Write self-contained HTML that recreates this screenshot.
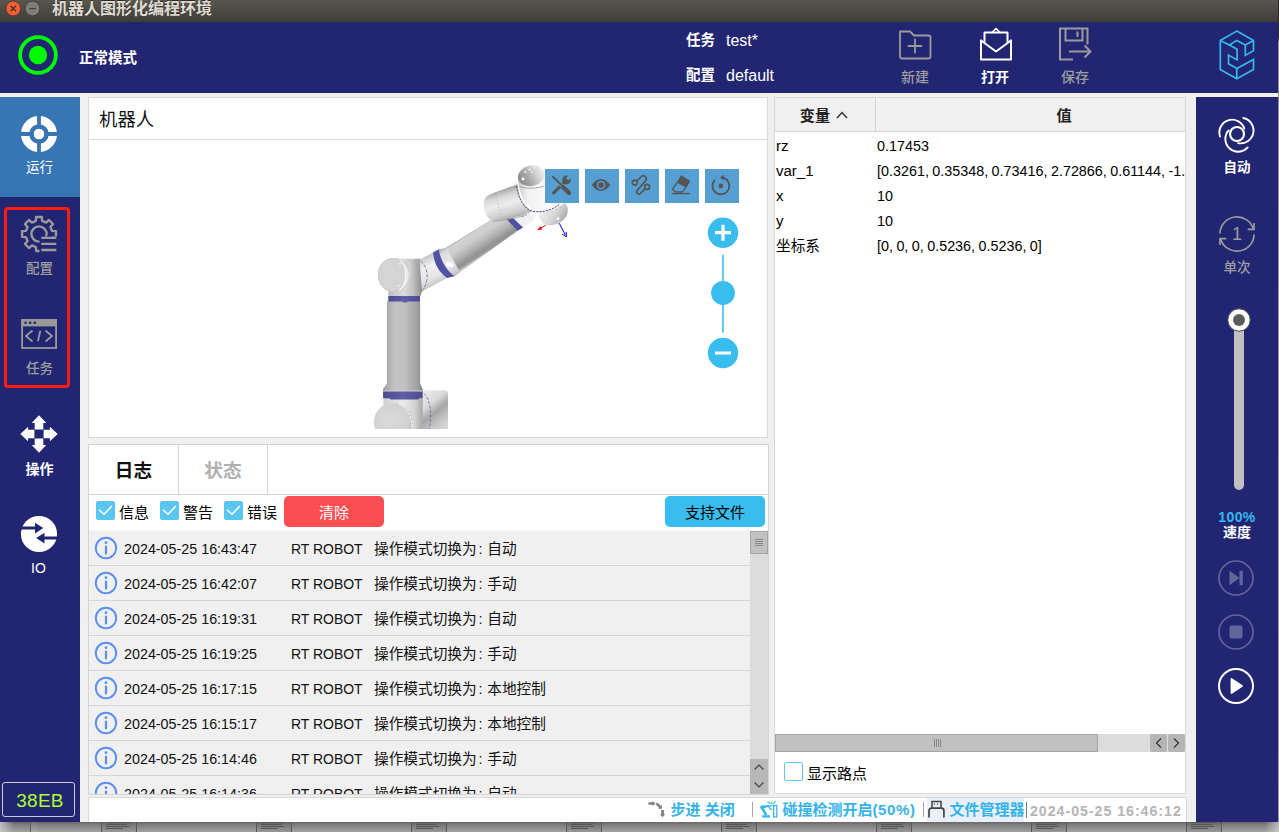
<!DOCTYPE html>
<html lang="zh-CN">
<head>
<meta charset="utf-8">
<title>机器人图形化编程环境</title>
<style>
*{box-sizing:border-box;margin:0;padding:0}
html,body{width:1279px;height:832px;overflow:hidden}
body{position:relative;background:#8a8a8a;font-family:"Liberation Sans","Noto Sans CJK SC",sans-serif;font-size:14.67px;color:#000;line-height:1}
.abs{position:absolute}
.desk{position:absolute;left:0;top:0;width:1279px;height:832px;background:linear-gradient(#3b3a36 0,#3b3a36 22px,#999 22px,#b5b5b5 822px,#686868 822px,#858585 826px,#a2a2a2 832px)}
.th{position:absolute;top:822px;width:36px;height:10px;border-left:1px solid #585858;border-right:1px solid #585858;background:rgba(0,0,0,.06)}
.th i{position:absolute;left:4px;height:1px;background:#565656}
.win{position:absolute;left:0;top:0;width:1278px;height:822px;background:#f0f0f0;overflow:hidden}
.titlebar{position:absolute;left:0;top:0;width:1278px;height:22px;background:linear-gradient(#59564e,#3e3d38);color:#dfdbd2;font-weight:bold;font-size:16px}
.titlebar .t{position:absolute;left:52px;top:-2.500px;line-height:22px;white-space:nowrap;text-shadow:0 -1px 0 rgba(0,0,0,.5)}
.tb-btn{position:absolute;top:1px;width:15px;height:15px;border-radius:50%}
.header{position:absolute;left:0;top:22px;width:1278px;height:71px;background:#222672}
.lside{position:absolute;left:0;top:97px;width:80px;height:725px;background:#222672}
.rside{position:absolute;left:1196px;top:97px;width:82px;height:725px;background:#222672}
.panel{position:absolute;background:#fff;border:1px solid #d9d9d9}
.w{color:#fff}
.sl{left:0;width:79px;text-align:center;font-size:13.5px;line-height:16px}
.nowrap{white-space:nowrap}
.tbtn{position:absolute;top:71px;width:34px;height:34px;background:#579fd3}
.tbtn svg{display:block}

.cb{position:absolute;width:19px;height:19px;background:#5ac5f1;border-radius:2px}
.cb svg{display:block}
.cbl{top:59px;font-size:15px;line-height:18px}
.lrow{position:absolute;left:0;width:661px;height:35px;border-bottom:1px solid #d6d6d6;font-size:14.67px;color:#111;white-space:nowrap}
.lrow span{top:9px;line-height:18px}
.cl{font-weight:normal;margin-left:2px;margin-right:-1px}
.c1{left:35px;font-size:15.3px;transform:scaleX(.9355);transform-origin:0 50%}.c2{left:201.500px;font-size:15.3px;transform:scaleX(.912);transform-origin:0 50%}.c3{left:285px;word-spacing:1.500px}
.vr{position:absolute;left:0;width:410px;height:25px;overflow:hidden;white-space:nowrap;font-size:15.3px;line-height:25px;color:#000}
.vr span{top:-1px;word-spacing:-.600px;transform:scaleX(.9385);transform-origin:0 50%}
.vr span:first-child{transform:scaleX(.98)}
</style>
</head>
<body>
<div class="desk"><div class="abs" style="left:1278px;top:0;width:1px;height:822px;background:linear-gradient(#2b2a26 0,#2b2a26 38px,#8f8f8f 42px,#9a9a9a 822px)"></div><div class="abs" style="left:30px;top:822px;width:1px;height:10px;background:#5c5c5c"></div><div class="abs" style="left:31px;top:822px;width:6px;height:10px;background:rgba(255,255,255,.08)"></div><div class="th" style="left:101px"><i style="top:0;width:25px"></i><i style="top:2px;width:21px"></i><i style="top:4px;width:23px"></i><i style="top:6px;width:17px"></i></div><div class="th" style="left:256px"><i style="top:0;width:25px"></i><i style="top:2px;width:21px"></i><i style="top:4px;width:23px"></i><i style="top:6px;width:17px"></i></div><div class="th" style="left:411px"><i style="top:0;width:25px"></i><i style="top:2px;width:21px"></i><i style="top:4px;width:23px"></i><i style="top:6px;width:17px"></i></div><div class="th" style="left:566px"><i style="top:0;width:25px"></i><i style="top:2px;width:21px"></i><i style="top:4px;width:23px"></i><i style="top:6px;width:17px"></i></div><div class="th" style="left:721px"><i style="top:0;width:25px"></i><i style="top:2px;width:21px"></i><i style="top:4px;width:23px"></i><i style="top:6px;width:17px"></i></div><div class="th" style="left:876px"><i style="top:0;width:25px"></i><i style="top:2px;width:21px"></i><i style="top:4px;width:23px"></i><i style="top:6px;width:17px"></i></div><div class="th" style="left:1031px"><i style="top:0;width:25px"></i><i style="top:2px;width:21px"></i><i style="top:4px;width:23px"></i><i style="top:6px;width:17px"></i></div><div class="th" style="left:1186px"><i style="top:0;width:25px"></i><i style="top:2px;width:21px"></i><i style="top:4px;width:23px"></i><i style="top:6px;width:17px"></i></div><div class="abs" style="left:0;top:822px;width:14px;height:10px;background:linear-gradient(90deg,rgba(210,210,210,.75),rgba(210,210,210,0))"></div><div class="abs" style="left:1265px;top:822px;width:14px;height:10px;background:linear-gradient(270deg,rgba(210,210,210,.75),rgba(210,210,210,0))"></div></div>
<div class="win">
  <div class="titlebar">
    <svg class="abs" style="left:4px;top:0" width="40" height="18" viewBox="0 0 40 18"><circle cx="9.300" cy="8.500" r="7.400" fill="#e9603a" stroke="#5a2a1a" stroke-width=".8"/><path d="M6.700 5.900l5.200 5.200M11.900 5.900l-5.200 5.200" stroke="#4a2010" stroke-width="1.200"/><circle cx="28.500" cy="8.500" r="7.400" fill="#807d76" stroke="#35342f" stroke-width=".8"/><path d="M25.300 8.600h6.400" stroke="#3c3b37" stroke-width="1.200"/></svg>
    <div class="t">机器人图形化编程环境</div>
  </div>
  <div class="header" id="header">
    <svg class="abs" style="left:17px;top:12px" width="42" height="42" viewBox="0 0 42 42"><circle cx="21" cy="21" r="17.9" fill="none" stroke="#00fb00" stroke-width="3.8"/><circle cx="21" cy="21" r="9.2" fill="#00fb00"/></svg>
    <div class="abs w nowrap" style="left:79px;top:28px;font-size:14.5px;font-weight:bold;line-height:16px">正常模式</div>
    <div class="abs w nowrap" style="left:686px;top:10px;font-size:14.5px;font-weight:bold;line-height:16px">任务</div>
    <div class="abs w nowrap" style="left:726px;top:11px;font-size:16px;line-height:16px">test*</div>
    <div class="abs w nowrap" style="left:686px;top:45px;font-size:14.5px;font-weight:bold;line-height:16px">配置</div>
    <div class="abs w nowrap" style="left:726px;top:46px;font-size:16px;line-height:16px">default</div>
    <!-- new -->
    <svg class="abs" style="left:897px;top:6px" width="36" height="34" viewBox="0 0 36 34" fill="none" stroke="#9a9a9a" stroke-width="1.8" stroke-linejoin="round" stroke-linecap="round"><path d="M3 3.5h10l4 4h14.5a2 2 0 0 1 2 2V28.5a2 2 0 0 1-2 2H5a2 2 0 0 1-2-2V3.5z"/><path d="M18 11.5v13M11.5 18h13"/></svg>
    <div class="abs nowrap" style="left:895px;top:47px;width:40px;text-align:center;font-size:14px;line-height:16px;color:#9e9e9e;font-weight:500">新建</div>
    <!-- open -->
    <svg class="abs" style="left:978px;top:4px" width="36" height="36" viewBox="0 0 36 36" fill="none" stroke="#fff" stroke-width="2" stroke-linejoin="round" stroke-linecap="round"><path d="M3 14.5V33.5h30V14.5"/><path d="M3 14.5l15 11 15-11"/><path d="M6.5 16V6.5h23V16"/><path d="M14 6.5l4-4 4 4" stroke-width="1.6"/></svg>
    <div class="abs w nowrap" style="left:975px;top:47px;width:40px;text-align:center;font-size:14px;font-weight:bold;line-height:16px">打开</div>
    <!-- save -->
    <svg class="abs" style="left:1057px;top:4px" width="38" height="36" viewBox="0 0 38 36" fill="none" stroke="#9a9a9a" stroke-width="2" stroke-linejoin="miter" stroke-linecap="butt"><path d="M16 33.5H3V2.5h27.5v16"/><path d="M8.5 2.5v12h17v-12"/><path d="M20.5 5.5v5.5"/><path d="M12 25.5h21"/><path d="M27.5 19.5l6 6-6 6"/></svg>
    <div class="abs nowrap" style="left:1055px;top:47px;width:40px;text-align:center;font-size:14px;line-height:16px;color:#9e9e9e;font-weight:500">保存</div>
    <!-- logo -->
    <svg class="abs" style="left:1216px;top:6px" width="42" height="54" viewBox="0 0 42 54" fill="none" stroke="#35b8ec" stroke-width="1.7" stroke-linejoin="miter"><path d="M20.8 3.1 37.5 12.4 37.5 22.8 29.3 27.4 29.3 17 20.8 12.4 13.4 17 21.1 21.3 21.1 31.9 12.5 27.1 12.5 35.8 20.8 40.6 37.5 31.4 37.5 41.5 20.8 50.8 4.3 41.5 4.3 12.4Z"/><path d="M4.3 12.4 13.4 17M29.3 17l8.2-4.6M20.8 40.6v10.2"/></svg>
  </div>
  <div class="lside" id="lside">
    <div class="abs" style="left:0;top:0;width:80px;height:100px;background:#3775b4"></div>
    <!-- run icon -->
    <svg class="abs" style="left:19px;top:17px" width="40" height="40" viewBox="-20 -20 40 40"><circle r="13.9" fill="none" stroke="#fff" stroke-width="8.2"/><circle r="5.2" fill="#fff"/><path d="M-20 0H20M0-20V20" stroke="#3775b4" stroke-width="3.8"/><circle r="5.2" fill="#fff"/></svg>
    <div class="abs w nowrap sl" style="top:63px">运行</div>
    <!-- red highlight -->
    <div class="abs" style="left:4px;top:110px;width:66px;height:181px;border:3px solid #fb1d0f;border-radius:4px"></div>
    <!-- config icon -->
    <svg class="abs" style="left:19px;top:117px" width="40" height="40" viewBox="-20 -20 40 40" fill="none" stroke="#9a9a9a" stroke-width="2.400" stroke-linejoin="round"><defs><clipPath id="gc"><path d="M-20-20h40v22.500h-19.500v17.500h-20.500z"/></clipPath></defs><g clip-path="url(#gc)"><path d="M-3.13 -13.03 L-2.84 -16.96 L2.84 -16.96 L3.13 -13.03 L7.00 -11.43 L9.99 -14.00 L14.00 -9.99 L11.43 -7.00 L13.03 -3.13 L16.96 -2.84 L16.96 2.84 L13.03 3.13 L11.43 7.00 L14.00 9.99 L9.99 14.00 L7.00 11.43 L3.13 13.03 L2.84 16.96 L-2.84 16.96 L-3.13 13.03 L-7.00 11.43 L-9.99 14.00 L-14.00 9.99 L-11.43 7.00 L-13.03 3.13 L-16.96 2.84 L-16.96 -2.84 L-13.03 -3.13 L-11.43 -7.00 L-14.00 -9.99 L-9.99 -14.00 L-7.00 -11.43Z"/><circle r="7.600"/></g><path d="M2.300 3.900h15M2.300 9.800h15M2.300 16h15" stroke-width="2.300"/></svg>
    <div class="abs nowrap sl" style="top:164px;color:#9e9e9e;font-weight:500">配置</div>
    <!-- task icon -->
    <svg class="abs" style="left:19px;top:219px" width="40" height="36" viewBox="0 0 40 36" fill="none" stroke="#9a9a9a" stroke-width="1.8"><rect x="3.100" y="4" width="34" height="28" /><rect x="3.100" y="4" width="34" height="5.500" fill="#9a9a9a"/><circle cx="6.600" cy="6.700" r="1.300" fill="#222672" stroke="none"/><circle cx="11.200" cy="6.700" r="1.300" fill="#222672" stroke="none"/><circle cx="15.800" cy="6.700" r="1.300" fill="#222672" stroke="none"/><path d="M13.500 14.500l-6.500 5.500 6.500 5.500M26.500 14.500l6.500 5.500-6.500 5.500M21.300 14.800l-2.400 10.400"/></svg>
    <div class="abs nowrap sl" style="top:264px;color:#9e9e9e;font-weight:500">任务</div>
    <!-- operate icon -->
    <svg class="abs" style="left:19px;top:317px" width="40" height="40" viewBox="-20 -20 40 40" fill="#fff"><path id="ar" d="M0-18.700l7.300 7.800h-3v6.300h-8.600v-6.300h-3z"/><use href="#ar" transform="rotate(90)"/><use href="#ar" transform="rotate(180)"/><use href="#ar" transform="rotate(270)"/></svg>
    <div class="abs w nowrap sl" style="top:364px;font-weight:bold;font-size:14px">操作</div>
    <!-- io icon -->
    <svg class="abs" style="left:19px;top:417px" width="40" height="40" viewBox="-20 -20 40 40"><circle r="18.100" fill="#fff"/><path d="M-19-7.400h15v-3.900l8.300 5.400-8.300 5.400v-3.900h-15zM19 2.600h-13.500v-3.900l-8.300 5.400 8.300 5.400v-3.900h13.500z" fill="#222672"/></svg>
    <div class="abs w nowrap sl" style="top:463px;font-size:14px;left:-1px">IO</div>
    <!-- 38EB -->
    <div class="abs nowrap" style="left:2px;top:685px;width:73px;height:35px;border:1px solid #c9c9d8;border-radius:3px;color:#adff2f;font-size:19px;line-height:36px;text-align:center;letter-spacing:.3px;padding-left:3px">38EB</div>
  </div>
  <div class="rside" id="rside">
    <!-- auto icon -->
    <svg class="abs" style="left:21px;top:17px" width="40" height="40" viewBox="-20 -20 40 40" fill="none" stroke="#fff" stroke-width="1.900" stroke-linecap="round"><circle r="7" stroke-width="2.200"/><g id="sw"><path d="M-17 2.500A12.500 12.500 0 0 1 7.300-5.500"/></g><use href="#sw" transform="rotate(120)"/><use href="#sw" transform="rotate(240)"/></svg>
    <div class="abs w nowrap sl" style="top:63px;left:0;width:82px;font-weight:bold">自动</div>
    <!-- single icon -->
    <svg class="abs" style="left:21px;top:117px" width="40" height="40" viewBox="-20 -20 40 40" fill="none" stroke="#9a9a9a" stroke-width="1.700" stroke-linecap="butt" stroke-linejoin="miter"><path d="M-17.100-.5A17.100 17.100 0 0 1 16.400-4.900M17.100.5A17.100 17.100 0 0 1-16.400 4.900"/><path d="M17-11v6.300h-6.300M-17 11v-6.300h6.300"/><text x="0" y="6.300" text-anchor="middle" font-size="18" fill="#9a9a9a" stroke="none" font-family="Liberation Sans, sans-serif">1</text></svg>
    <div class="abs nowrap sl" style="top:163px;left:0;width:82px;color:#9e9e9e;font-weight:500">单次</div>
    <!-- slider -->
    <div class="abs" style="left:38px;top:223px;width:10px;height:170px;background:#c0c0c0;border-radius:0 0 5px 5px"></div>
    <svg class="abs" style="left:30px;top:210px" width="26" height="26" viewBox="-13 -13 26 26"><circle r="11.200" fill="#fff" stroke="#4a4a4a" stroke-width="1"/><circle r="6" fill="#5c5c5c"/></svg>
    <div class="abs nowrap" style="left:0;top:413px;width:82px;text-align:center;padding-left:0px;color:#35b8ec;font-weight:bold;font-size:14px;line-height:14px;letter-spacing:.400px">100%</div>
    <div class="abs w nowrap" style="left:0;top:427px;width:82px;text-align:center;padding-left:0px;font-weight:bold;font-size:14px;line-height:16px">速度</div>
    <!-- step -->
    <svg class="abs" style="left:20px;top:461px" width="40" height="40" viewBox="-20 -20 40 40"><circle r="17" fill="none" stroke="#63669a" stroke-width="1.700"/><path d="M-6.500-7.200l10 7.200-10 7.200zM3.500-7.200h3.300v14.400h-3.300z" fill="#63669a"/></svg>
    <!-- stop -->
    <svg class="abs" style="left:20px;top:515px" width="40" height="40" viewBox="-20 -20 40 40"><circle r="17" fill="none" stroke="#63669a" stroke-width="1.700"/><rect x="-6.500" y="-6.500" width="13" height="13" rx="2" fill="#63669a"/></svg>
    <!-- play -->
    <svg class="abs" style="left:20px;top:569px" width="40" height="40" viewBox="-20 -20 40 40"><circle r="17" fill="none" stroke="#fff" stroke-width="2"/><path d="M-4.500-7l10.500 7-10.500 7z" fill="#fff" stroke="#fff" stroke-width="1.800" stroke-linejoin="round"/></svg>
  </div>
  <div class="panel" id="robot" style="left:88px;top:97px;width:680px;height:341px">
    <div class="abs nowrap" style="left:10px;top:10px;font-size:18.4px;line-height:24px;color:#111">机器人</div>
    <div class="abs" style="left:1px;top:41px;width:677px;height:1px;background:#dcdcdc"></div>
    <!--RS--><svg class="abs" style="left:251px;top:52px" width="260" height="290" viewBox="340 150 260 290">
      <defs>
        <linearGradient id="gcyl" x1="0" x2="1" y1="0" y2="0"><stop offset="0" stop-color="#7f7f7f"/><stop offset=".06" stop-color="#a6a6a6"/><stop offset=".3" stop-color="#c4c4c4"/><stop offset=".55" stop-color="#c0c0c0"/><stop offset=".85" stop-color="#a2a2a2"/><stop offset=".96" stop-color="#8c8c8c"/><stop offset="1" stop-color="#787878"/></linearGradient>
        <linearGradient id="gband" x1="0" x2="1" y1="0" y2="0"><stop offset="0" stop-color="#4a4b90"/><stop offset=".5" stop-color="#5d5ea7"/><stop offset="1" stop-color="#4b4c8e"/></linearGradient>
        <linearGradient id="garm" gradientUnits="userSpaceOnUse" x1="474" y1="229.500" x2="488.500" y2="252"><stop offset="0" stop-color="#a0a0a0"/><stop offset=".07" stop-color="#d2d2d2"/><stop offset=".3" stop-color="#cfcfcf"/><stop offset=".55" stop-color="#b6b6b6"/><stop offset=".85" stop-color="#909090"/><stop offset=".95" stop-color="#9c9c9c"/><stop offset="1" stop-color="#c6c6c6"/></linearGradient>
        <linearGradient id="gflare" gradientUnits="userSpaceOnUse" x1="440" y1="250" x2="456" y2="277"><stop offset="0" stop-color="#b8b8b8"/><stop offset=".15" stop-color="#dedede"/><stop offset=".55" stop-color="#e6e6e6"/><stop offset=".85" stop-color="#cfcfcf"/><stop offset="1" stop-color="#aaaaaa"/></linearGradient>
        <linearGradient id="gneck" gradientUnits="userSpaceOnUse" x1="426" y1="256" x2="440" y2="286"><stop offset="0" stop-color="#c4c4c4"/><stop offset=".3" stop-color="#f0f0f0"/><stop offset=".7" stop-color="#e4e4e4"/><stop offset="1" stop-color="#b8b8b8"/></linearGradient>
        <linearGradient id="gw1" gradientUnits="userSpaceOnUse" x1="502" y1="190" x2="511" y2="221"><stop offset="0" stop-color="#a8a8a8"/><stop offset=".2" stop-color="#d8d8d8"/><stop offset=".45" stop-color="#ededed"/><stop offset=".75" stop-color="#d0d0d0"/><stop offset="1" stop-color="#a0a0a0"/></linearGradient>
        <radialGradient id="gdisc" cx=".42" cy=".45" r=".62"><stop offset="0" stop-color="#dadada"/><stop offset=".8" stop-color="#d2d2d2"/><stop offset="1" stop-color="#b4b4b4"/></radialGradient>
        <linearGradient id="gelb" x1="0" x2="1" y1="0" y2="0"><stop offset="0" stop-color="#bcbcbc"/><stop offset=".45" stop-color="#dcdcdc"/><stop offset=".7" stop-color="#c6c6c6"/><stop offset=".93" stop-color="#9c9c9c"/><stop offset="1" stop-color="#848484"/></linearGradient>
        <linearGradient id="gbase" x1="0" x2="1" y1="0" y2="0"><stop offset="0" stop-color="#cfcfcf"/><stop offset=".5" stop-color="#ececec"/><stop offset=".8" stop-color="#d2d2d2"/><stop offset="1" stop-color="#a6a6a6"/></linearGradient>
        <linearGradient id="gblk" gradientUnits="userSpaceOnUse" x1="424" y1="394" x2="448" y2="424"><stop offset="0" stop-color="#e8e8e8"/><stop offset=".3" stop-color="#dadada"/><stop offset=".55" stop-color="#a6a6a6"/><stop offset=".8" stop-color="#c4c4c4"/><stop offset="1" stop-color="#d6d6d6"/></linearGradient>
        <linearGradient id="gcap" gradientUnits="userSpaceOnUse" x1="518" y1="180" x2="545" y2="172"><stop offset="0" stop-color="#888"/><stop offset=".35" stop-color="#a8a8a8"/><stop offset=".75" stop-color="#dcdcdc"/><stop offset="1" stop-color="#f0f0f0"/></linearGradient>
        <linearGradient id="gw2" gradientUnits="userSpaceOnUse" x1="518" y1="198" x2="548" y2="198"><stop offset="0" stop-color="#c8c8c8"/><stop offset=".3" stop-color="#f0f0f0"/><stop offset="1" stop-color="#fbfbfb"/></linearGradient>
        <linearGradient id="gw3" gradientUnits="userSpaceOnUse" x1="540" y1="206" x2="566" y2="222"><stop offset="0" stop-color="#f4f4f4"/><stop offset=".5" stop-color="#dcdcdc"/><stop offset="1" stop-color="#a4a4a4"/></linearGradient>
        <clipPath id="cview"><rect x="340" y="150" width="260" height="278.900"/></clipPath>
      </defs>
      <g clip-path="url(#cview)">
        <!-- base -->
        <path d="M422 390.200h22a4 4 0 0 1 4 4V430h-26z" fill="url(#gblk)"/>
        <path d="M383.500 399h39.200v31h-39.200z" fill="url(#gbase)"/>
        <path d="M424 393.500c6 6 8.500 20 5 36" fill="none" stroke="#5a5f8c" stroke-width=".7" stroke-dasharray="3 1.500"/>
        <ellipse cx="393" cy="422" rx="19.200" ry="19" fill="url(#gdisc)"/>
        <path d="M399 403.800c9 4.500 13.500 14 13 26" fill="none" stroke="#fafafa" stroke-width="1" stroke-dasharray="3 1.200"/>
        <!-- cylinder -->
        <path d="M386.900 301h33.200v82.500l2.600 5.800v2.500h-39.600v-2.500l3.800-5.800z" fill="url(#gcyl)"/>
        <path d="M383.100 390.400h39.600v1.600h-39.600z" fill="#d6d6d0"/>
        <!-- lower band -->
        <path d="M383.100 391.400h39.600v7.200h-3.600l-1 .9h-27.500l-1-.9h-6.500z" fill="url(#gband)"/>
        <!-- upper arm -->
        <path d="M446 247.800L506 210.600 524 226.300 459.900 272.300z" fill="url(#garm)"/>
        <path d="M517.600 230.700l5.400-3.200 10 -7 3-6-14-1-8 5z" fill="#f0f0f0"/>
        <!-- elbow -->
        <path d="M392 258.800h27.500c1.500 0 2 1 2 3l.5 29.700-1.500 4.500h-32.200v-9z" fill="url(#gelb)"/>
        <path d="M419.500 259.500L433 252.600c1 11 6 19.500 14 25.400l-25 13.500z" fill="url(#gneck)"/>
        <path d="M420.500 261c7.500 5.500 9.500 19 2 29.500" fill="none" stroke="#5a5f8c" stroke-width=".7" stroke-dasharray="3.500 1.500"/>
        <path d="M438.800 249.200L446 247.800 459.900 272.300 454.600 276.200C446 270 440.500 260 438.800 249.200z" fill="url(#gflare)"/>
        <ellipse cx="394.300" cy="275" rx="16.200" ry="16.700" fill="#c9c9c9"/><ellipse cx="393.600" cy="275" rx="15.300" ry="16.500" fill="#e9e9e9"/>
        <ellipse cx="392" cy="275" rx="13.800" ry="16.500" fill="#d4d4d4" stroke="#bdbdbd" stroke-width=".600"/>
        <path d="M400 260.500c7.500 5 8 22.500-.5 29.500" fill="none" stroke="#f4f4f4" stroke-width="1.400"/>
        <path d="M408.500 262.500c3 7.500 2 19-4.500 26.500" fill="none" stroke="#f2f2f2" stroke-width=".6" stroke-dasharray="2 1"/>
        <ellipse cx="449.600" cy="264.600" rx="4" ry="2.300" transform="rotate(24 449.600 264.600)" fill="#fff"/>
        <!-- bands -->
        <path d="M388.300 295.900h31.700v5.700h-12.500l-.5 1h-4.200l-.5-1h-14z" fill="url(#gband)"/>
        <path d="M433 252.600l5.800-3.400c1.700 10.800 7.200 20.800 15.800 27l-7.600 1.800c-8-5.900-13-14.400-14-25.400z" fill="#5051a0"/>
        <path d="M506.200 218.800l7.100-.5 9.700 9.200-5.400 3.200z" fill="#5051a0"/>
        <!-- wrist3 -->
        <path d="M537.500 206c8 5 20 3.500 27-3 2.500 1.500 4 5 3.200 9.500-1.500 7.500-10 13-18.700 12.800-5-.2-8.500-3.500-10.500-9.500z" fill="url(#gw3)"/>
        <!-- wrist2 body -->
        <path d="M518.100 178c-.5 5 1.500 12 4 18 2.500 6 6 11 12 14.500 8 2.500 20 1 28-6.500l-10-30z" fill="url(#gw2)"/>
        <ellipse cx="531.400" cy="175.800" rx="13.600" ry="10.200" transform="rotate(-12 531.400 175.800)" fill="url(#gcap)"/>
        <!-- wrist1 -->
        <path d="M486.500 196.500Q490 194 496 192L517.600 184.300c1 10 5 20 13 25.500l-8.700 5.800-16.200 3.400-12.600 1.700c-5-1-8.800-7.500-9.300-14.400-.2-4.500.8-8 2.700-9.800z" fill="url(#gw1)"/><path d="M493 221.400l12.700-1.700 16.200-3.400 8.700-5.800" fill="none" stroke="#9a9a9a" stroke-width="1.200" opacity=".7"/>
        <path d="M516.600 186c1.500 11 6 20 13 24.500 9 3 22 .5 29.500-6" fill="none" stroke="#454a78" stroke-width="1" stroke-dasharray="2.200 1"/>
        <path d="M495.500 193c1.500 8 3.500 18 7.500 26" fill="none" stroke="#909090" stroke-width=".6" stroke-dasharray="1 2.500"/>
        <path d="M519.500 186.500c8 2.500 18 2 25-.5" fill="none" stroke="#8a8a8a" stroke-width=".7"/>
        <path d="M522 217c4-1 8-4 10.500-9" fill="none" stroke="#5a5f8c" stroke-width=".6" stroke-dasharray="2 1.500"/>
        <g fill="#fff"><circle cx="523" cy="179" r="1.400"/><circle cx="525.300" cy="172" r=".9"/><circle cx="529.600" cy="169.600" r="1"/><circle cx="532" cy="172" r=".8"/><circle cx="534" cy="167.800" r=".8"/><circle cx="541.600" cy="168" r="1.200"/><circle cx="558" cy="218.500" r="1.500"/></g>
        <g fill="#8e8e8e"><circle cx="553" cy="213" r=".4"/><circle cx="556" cy="209.500" r=".4"/><circle cx="560.500" cy="207" r=".4"/><circle cx="563" cy="211" r=".4"/><circle cx="562" cy="216" r=".4"/><circle cx="549.500" cy="217" r=".4"/><circle cx="547" cy="214" r=".4"/></g>
        <g fill="#fff"><circle cx="389" cy="271" r=".5"/><circle cx="393" cy="270" r=".5"/><circle cx="390" cy="279" r=".5"/><circle cx="394" cy="276" r=".5"/><circle cx="400" cy="263.500" r=".8"/><circle cx="398.500" cy="285.500" r=".8"/></g>
        <!-- arrows -->
        <path d="M545.700 225.300L539.500 228.800" stroke="#f00" stroke-width="1"/><path d="M537 230.200l3.600-4 1.600 3.200z" fill="#f00"/>
        <path d="M559.200 223.200l6.200 11.800" stroke="#00f" stroke-width="1"/><path d="M566.400 236.800l-4.300-2.600M566.400 236.800l-.2-4.900" stroke="#00f" stroke-width="1"/>
      </g>
    </svg><!--RE-->
    <!-- toolbar -->
    <div class="tbtn" style="left:456px"><svg width="34" height="34" viewBox="0 0 34 34" fill="none" stroke="#555" stroke-linecap="round"><path d="M8.700 23.800l10.800-10.800" stroke-width="3.300"/><circle cx="21.600" cy="10.900" r="4.300" fill="#555" stroke="none"/><path d="M22.200 10.300l4.500-4.500" stroke="#579fd3" stroke-width="3.400" stroke-linecap="butt"/><path d="M7.700 7.400l9.300 9.300" stroke="#579fd3" stroke-width="4"/><path d="M8 7.700l8.700 8.700" stroke-width="2"/><path d="M18 18l6 5.900" stroke-width="4.300"/></svg></div>
    <div class="tbtn" style="left:496px"><svg width="34" height="34" viewBox="0 0 34 34"><path d="M6.800 16.100C9.500 12.200 12.800 10.100 16 10.100s6.500 2.100 9.300 6c-2.800 3.900-6.100 6-9.300 6s-6.500-2.100-9.200-6z" fill="#555"/><circle cx="16" cy="16.100" r="3.600" fill="#555" stroke="#579fd3" stroke-width="1.500"/></svg></div>
    <div class="tbtn" style="left:536px"><svg width="34" height="34" viewBox="0 0 34 34" fill="none" stroke="#555" stroke-width="1.700" stroke-linecap="round"><circle cx="9.800" cy="13.600" r="2.500"/><circle cx="22.100" cy="17.900" r="2.500"/><path d="M11.700 12l4.300-4.100a3 3 0 0 1 4.500 4l-8.200 9.300a2.300 2.300 0 0 0 3.300 3.200l4.500-4.800"/></svg></div>
    <div class="tbtn" style="left:576px"><svg width="34" height="34" viewBox="0 0 34 34" fill="none" stroke="#555" stroke-width="1.300" stroke-linejoin="round"><path d="M12.500 13.200l-5.200 7.300 3.600 2.500h6.800l3.400-5"/><path d="M16.200 7l8.500 5.200-3.700 5.800-8.500-4.800z" fill="#555"/><path d="M6.800 24.600h18.400" stroke-width="1.400"/></svg></div>
    <div class="tbtn" style="left:616px"><svg width="34" height="34" viewBox="0 0 34 34" fill="none" stroke="#555" stroke-width="1.700"><path d="M17.360 8.630A8.400 8.400 0 1 1 9.960 10.960"/><path d="M18.600 6.500l-3 2 3 2.300" fill="#555" stroke-width="1"/><circle cx="15.900" cy="16.900" r="2.300" fill="#555" stroke="none"/></svg></div>
    <!-- zoom -->
    <svg class="abs" style="left:614px;top:119px" width="40" height="152" viewBox="0 0 40 152"><path d="M20 37.800v78" stroke="#38bdee" stroke-width="1.600"/><circle cx="20" cy="15.700" r="15.200" fill="#38bdee"/><circle cx="20" cy="76" r="11.900" fill="#38bdee"/><circle cx="20" cy="136" r="15.200" fill="#38bdee"/><path d="M12 15.700h16M20 7.700v16M12 136h16" stroke="#fff" stroke-width="3.200"/></svg>
  </div>
  <div class="panel" id="log" style="left:88px;top:444px;width:681px;height:351px;border-color:#d4d4d4">
    <div class="abs nowrap" style="left:0;top:0;width:90px;height:49px;text-align:center;font-size:18.67px;font-weight:bold;line-height:52px;color:#111;border-right:1px solid #d4d4d4">日志</div>
    <div class="abs nowrap" style="left:90px;top:0;width:89px;height:49px;text-align:center;font-size:18.67px;font-weight:bold;line-height:52px;color:#b0b0b0;border-right:1px solid #d4d4d4">状态</div>
    <div class="abs" style="left:0;top:49px;width:679px;height:1px;background:#d4d4d4"></div>
    <div class="cb" style="left:7px;top:56px"><svg width="19" height="19" viewBox="0 0 19 19"><path d="M3 8.700l5 4.600 7.800-8.200" fill="none" stroke="#fff" stroke-width="1.500"/></svg></div>
    <div class="abs nowrap cbl" style="left:30px">信息</div>
    <div class="cb" style="left:71px;top:56px"><svg width="19" height="19" viewBox="0 0 19 19"><path d="M3 8.700l5 4.600 7.800-8.200" fill="none" stroke="#fff" stroke-width="1.500"/></svg></div>
    <div class="abs nowrap cbl" style="left:94px">警告</div>
    <div class="cb" style="left:135px;top:56px"><svg width="19" height="19" viewBox="0 0 19 19"><path d="M3 8.700l5 4.600 7.800-8.200" fill="none" stroke="#fff" stroke-width="1.500"/></svg></div>
    <div class="abs nowrap cbl" style="left:158px">错误</div>
    <div class="abs nowrap" style="left:195px;top:51px;width:100px;height:31px;border-radius:5px;background:#fb4e52;color:#fff;text-align:center;font-size:15px;line-height:33px">清除</div>
    <div class="abs nowrap" style="left:576px;top:51px;width:100px;height:31px;border-radius:5px;background:#38bdee;color:#000;text-align:center;font-size:15px;line-height:33px">支持文件</div>
    <div class="abs" style="left:0;top:85px;width:679px;height:1px;background:#f7f7f7"></div>
    <div class="abs" id="loglist" style="left:0;top:86px;width:679px;height:263px;background:#f0f0f0;overflow:hidden">
      <div class="lrow" style="top:0px"><svg class="abs" style="left:5px;top:4.500px" width="24" height="24" viewBox="-12 -12 24 24"><circle r="10.200" fill="none" stroke="#5b8ff0" stroke-width="1.900"/><circle cy="-5.300" r="1.400" fill="#5b8ff0"/><path d="M0-1.500v7" stroke="#5b8ff0" stroke-width="2.200" stroke-linecap="round"/></svg><span class="abs c1">2024-05-25 16:43:47</span><span class="abs c2">RT ROBOT</span><span class="abs c3">操作模式切换为<b class="cl">:</b> 自动</span></div>
      <div class="lrow" style="top:35px"><svg class="abs" style="left:5px;top:4.500px" width="24" height="24" viewBox="-12 -12 24 24"><circle r="10.200" fill="none" stroke="#5b8ff0" stroke-width="1.900"/><circle cy="-5.300" r="1.400" fill="#5b8ff0"/><path d="M0-1.500v7" stroke="#5b8ff0" stroke-width="2.200" stroke-linecap="round"/></svg><span class="abs c1">2024-05-25 16:42:07</span><span class="abs c2">RT ROBOT</span><span class="abs c3">操作模式切换为<b class="cl">:</b> 手动</span></div>
      <div class="lrow" style="top:70px"><svg class="abs" style="left:5px;top:4.500px" width="24" height="24" viewBox="-12 -12 24 24"><circle r="10.200" fill="none" stroke="#5b8ff0" stroke-width="1.900"/><circle cy="-5.300" r="1.400" fill="#5b8ff0"/><path d="M0-1.500v7" stroke="#5b8ff0" stroke-width="2.200" stroke-linecap="round"/></svg><span class="abs c1">2024-05-25 16:19:31</span><span class="abs c2">RT ROBOT</span><span class="abs c3">操作模式切换为<b class="cl">:</b> 自动</span></div>
      <div class="lrow" style="top:105px"><svg class="abs" style="left:5px;top:4.500px" width="24" height="24" viewBox="-12 -12 24 24"><circle r="10.200" fill="none" stroke="#5b8ff0" stroke-width="1.900"/><circle cy="-5.300" r="1.400" fill="#5b8ff0"/><path d="M0-1.500v7" stroke="#5b8ff0" stroke-width="2.200" stroke-linecap="round"/></svg><span class="abs c1">2024-05-25 16:19:25</span><span class="abs c2">RT ROBOT</span><span class="abs c3">操作模式切换为<b class="cl">:</b> 手动</span></div>
      <div class="lrow" style="top:140px"><svg class="abs" style="left:5px;top:4.500px" width="24" height="24" viewBox="-12 -12 24 24"><circle r="10.200" fill="none" stroke="#5b8ff0" stroke-width="1.900"/><circle cy="-5.300" r="1.400" fill="#5b8ff0"/><path d="M0-1.500v7" stroke="#5b8ff0" stroke-width="2.200" stroke-linecap="round"/></svg><span class="abs c1">2024-05-25 16:17:15</span><span class="abs c2">RT ROBOT</span><span class="abs c3">操作模式切换为<b class="cl">:</b> 本地控制</span></div>
      <div class="lrow" style="top:175px"><svg class="abs" style="left:5px;top:4.500px" width="24" height="24" viewBox="-12 -12 24 24"><circle r="10.200" fill="none" stroke="#5b8ff0" stroke-width="1.900"/><circle cy="-5.300" r="1.400" fill="#5b8ff0"/><path d="M0-1.500v7" stroke="#5b8ff0" stroke-width="2.200" stroke-linecap="round"/></svg><span class="abs c1">2024-05-25 16:15:17</span><span class="abs c2">RT ROBOT</span><span class="abs c3">操作模式切换为<b class="cl">:</b> 本地控制</span></div>
      <div class="lrow" style="top:210px"><svg class="abs" style="left:5px;top:4.500px" width="24" height="24" viewBox="-12 -12 24 24"><circle r="10.200" fill="none" stroke="#5b8ff0" stroke-width="1.900"/><circle cy="-5.300" r="1.400" fill="#5b8ff0"/><path d="M0-1.500v7" stroke="#5b8ff0" stroke-width="2.200" stroke-linecap="round"/></svg><span class="abs c1">2024-05-25 16:14:46</span><span class="abs c2">RT ROBOT</span><span class="abs c3">操作模式切换为<b class="cl">:</b> 手动</span></div>
      <div class="lrow" style="top:245px"><svg class="abs" style="left:5px;top:4.500px" width="24" height="24" viewBox="-12 -12 24 24"><circle r="10.200" fill="none" stroke="#5b8ff0" stroke-width="1.900"/><circle cy="-5.300" r="1.400" fill="#5b8ff0"/><path d="M0-1.500v7" stroke="#5b8ff0" stroke-width="2.200" stroke-linecap="round"/></svg><span class="abs c1">2024-05-25 16:14:36</span><span class="abs c2">RT ROBOT</span><span class="abs c3">操作模式切换为<b class="cl">:</b> 自动</span></div>
      <div class="abs" style="left:661px;top:0;width:18px;height:264px;background:#dcdcdc"></div>
      <div class="abs" style="left:661px;top:0px;width:18px;height:23px;background:#c1c1c1;border:1px solid #a6a6a6"><div class="abs" style="left:4px;top:7px;width:8px;height:7px;background:repeating-linear-gradient(#8a8a8a 0,#8a8a8a 1px,transparent 1px,transparent 2px)"></div></div>
      <div class="abs" style="left:661px;top:228px;width:18px;height:35px;background:#b8b8b8"><svg width="18" height="35" viewBox="-0.500 0 18 35" fill="none" stroke="#444" stroke-width="1.200"><path d="M4 10.500l4.500-4.500 4.500 4.500M4 23.500l4.500 4.500 4.500-4.500"/></svg></div>
    </div>
  </div>
  <div class="panel" id="vars" style="left:774px;top:97px;width:412px;height:697px">
    <div class="abs" style="left:0;top:0;width:410px;height:34px;background:#f0f0f0;border-bottom:1px solid #d4d4d4"></div>
    <div class="abs" style="left:100px;top:0;width:1px;height:33px;background:#d4d4d4"></div>
    <div class="abs nowrap" style="left:-1px;top:0;width:100px;height:33px;text-align:center;font-weight:bold;font-size:15.2px;line-height:35px;color:#222">变量 <svg width="12" height="8" viewBox="0 0 12 8" style="margin-left:2px;vertical-align:2px"><path d="M1 7l5-5.500 5 5.500" fill="none" stroke="#333" stroke-width="1.500"/></svg></div>
    <div class="abs nowrap" style="left:103px;top:0;width:372px;height:33px;text-align:center;font-weight:bold;font-size:15.2px;line-height:35px;color:#222">值</div>
    <div class="vr" style="top:36px"><span class="abs" style="left:1px">rz</span><span class="abs" style="left:102px">0.17453</span></div>
    <div class="vr" style="top:61px"><span class="abs" style="left:1px">var_1</span><span class="abs" style="left:102px">[0.3261, 0.35348, 0.73416, 2.72866, 0.61144, -1.02049]</span></div>
    <div class="vr" style="top:86px"><span class="abs" style="left:1px">x</span><span class="abs" style="left:102px">10</span></div>
    <div class="vr" style="top:111px"><span class="abs" style="left:1px">y</span><span class="abs" style="left:102px">10</span></div>
    <div class="vr" style="top:136px"><span class="abs" style="left:1px;top:0;font-size:14.67px;transform:none">坐标系</span><span class="abs" style="left:102px">[0, 0, 0, 0.5236, 0.5236, 0]</span></div>
    <!-- h scrollbar -->
    <div class="abs" style="left:0;top:636px;width:410px;height:18px;background:#dcdcdc"></div>
    <div class="abs" style="left:0;top:636px;width:323px;height:18px;background:#c1c1c1;border:1px solid #a6a6a6"><div class="abs" style="left:158px;top:4px;width:8px;height:8px;background:repeating-linear-gradient(90deg,#8a8a8a 0,#8a8a8a 1px,transparent 1px,transparent 2px)"></div></div>
    <div class="abs" style="left:375px;top:636px;width:17px;height:18px;background:#b5b5b5;border-radius:2px"><svg width="17" height="18" viewBox="0 0 17 18" fill="none" stroke="#333" stroke-width="1.200"><path d="M11 4.500l-4.500 4.500 4.500 4.500"/></svg></div>
    <div class="abs" style="left:393px;top:636px;width:17px;height:18px;background:#b5b5b5;border-radius:2px"><svg width="17" height="18" viewBox="0 0 17 18" fill="none" stroke="#333" stroke-width="1.200"><path d="M6 4.500l4.500 4.500-4.500 4.500"/></svg></div>
    <div class="abs" style="left:9px;top:664px;width:19px;height:19px;background:#fff;border:1px solid #5bc8f5;border-radius:2px"></div>
    <div class="abs nowrap" style="left:32px;top:667px;font-size:15px;line-height:18px">显示路点</div>
  </div>
  <div class="panel" id="status" style="left:88px;top:797px;width:1099px;height:25px;border-bottom:none;font-weight:bold;font-size:15px;color:#35b3e8">
    <svg class="abs" style="left:559px;top:2px" width="18" height="18" viewBox="0 0 18 18" fill="#808080"><path d="M.4 2.200h4v-1.300l3 2.500-3 2.500v-1.200h-4z"/><path d="M8.400 3.400l4.100 3.900" stroke="#808080" stroke-width="2.600" fill="none"/><path d="M10.200 8.800h3.800v-3.900z"/><path d="M13.200 10.100h2.700v4.100h1.300l-2.650 3-2.650-3h1.300z"/></svg>
    <div class="abs nowrap" id="st1" style="left:581.500px;top:4px;line-height:16px">步进 关闭</div>
    <div class="abs" style="left:663px;top:4px;width:1px;height:15px;background:#a4a4a4"></div>
    <svg class="abs" style="left:671px;top:2px" width="19" height="19" viewBox="0 0 19 19" fill="#35b8ec" stroke="none"><rect x="2.100" y="15.200" width="7.800" height="2.400"/><path d="M1.800 7.400l4.400 7.800" stroke="#35b8ec" stroke-width="2.700"/><circle cx="2" cy="7.200" r="1.800"/><path d="M1.500 5.600l7.800-.6.400 1.600-7.400 2.200z"/><path d="M12.500 5.200l-2.600 1-.9 1.300 1 1.400 2.200.9" fill="none" stroke="#35b8ec" stroke-width="1.200"/><rect x="13.700" y="5.500" width="3.100" height="11.500" fill="none" stroke="#35b8ec" stroke-width="1.300"/><path d="M7.800 1.600l2.200 1.800M11.600 2.600l.3 1.400M15.200 1.500l-1.600 2.100" stroke="#35b8ec" stroke-width="1.200" stroke-linecap="round"/></svg>
    <div class="abs nowrap" id="st2" style="left:693.500px;top:4px;line-height:16px">碰撞检测开启<span style="letter-spacing:.600px">(50%)</span></div>
    <div class="abs" style="left:834px;top:4px;width:1px;height:15px;background:#a4a4a4"></div>
    <div class="abs" style="left:838px;top:0px;width:97px;height:24px;background:#e8eff8"></div>
    <svg class="abs" style="left:838px;top:1px" width="19" height="20" viewBox="0 0 19 20" fill="none" stroke="#444" stroke-width="1.700"><path d="M2 18.600v-7a2.500 2.500 0 0 1 2.500-2.500h9.900a2.500 2.500 0 0 1 2.500 2.500v7"/><path d="M5 9v-6.600h9v6.600" stroke-width="1.500"/><path d="M7.400 4.300v1.800M10.600 4.300v1.800" stroke-width="1" stroke="#666"/></svg>
    <div class="abs nowrap" id="st3" style="left:860.500px;top:4px;line-height:16px">文件管理器</div>
    <div class="abs" style="left:937px;top:4px;width:1px;height:16px;background:#777"></div>
    <div class="abs nowrap" id="st4" style="left:941px;top:5px;line-height:16px;color:#b4b4b4;font-size:14.2px;letter-spacing:.970px">2024-05-25 16:46:12</div>
  </div>
</div>
</body>
</html>
